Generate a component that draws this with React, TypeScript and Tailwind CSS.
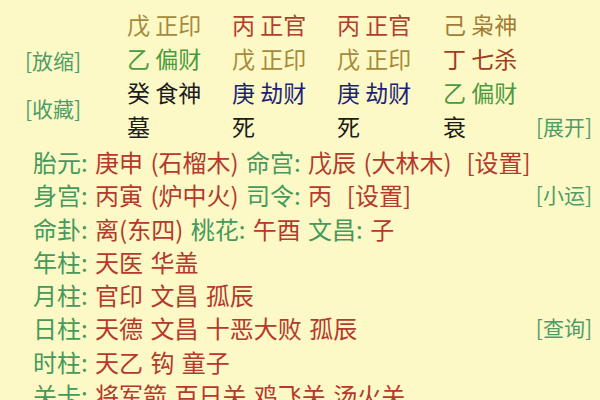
const font = { fontFamily: '"Noto Sans CJK SC", "Noto Sans", sans-serif' };

const OLIVE = "text-[#a68a3c]";
const RED = "text-[#b0402e]";
const GREEN = "text-[#4c9a40]";
const BLACK = "text-[#1c1c1c]";
const BLUE = "text-[#1d1f78]";
const GOLD = "text-[#a27c36]";
const BROWN = "text-[#9e3e20]";

type Cell = { text: string; color: string };

// top row is mostly scrolled out of view
const hiddenRow: Cell[] = [
  { text: "辛 劫财", color: OLIVE },
  { text: "庚 比肩", color: RED },
  { text: "庚 比肩", color: RED },
  { text: "丁 七杀", color: GOLD },
];

const pillars: Cell[][] = [
  [
    { text: "戊 正印", color: OLIVE },
    { text: "丙 正官", color: RED },
    { text: "丙 正官", color: RED },
    { text: "己 枭神", color: GOLD },
  ],
  [
    { text: "乙 偏财", color: GREEN },
    { text: "戊 正印", color: OLIVE },
    { text: "戊 正印", color: OLIVE },
    { text: "丁 七杀", color: BROWN },
  ],
  [
    { text: "癸 食神", color: BLACK },
    { text: "庚 劫财", color: BLUE },
    { text: "庚 劫财", color: BLUE },
    { text: "乙 偏财", color: GREEN },
  ],
  [
    { text: "墓", color: BLACK },
    { text: "死", color: BLACK },
    { text: "死", color: BLACK },
    { text: "衰", color: BLACK },
  ],
];

type Part = { t: string; label?: boolean };

const lines: { parts: Part[]; link?: string }[] = [
  {
    parts: [
      { t: "胎元:", label: true },
      { t: " 庚申 (石榴木) " },
      { t: "命宫:", label: true },
      { t: " 戊辰 (大林木)  [设置]" },
    ],
  },
  {
    parts: [
      { t: "身宫:", label: true },
      { t: " 丙寅 (炉中火) " },
      { t: "司令:", label: true },
      { t: " 丙  [设置]" },
    ],
    link: "[小运]",
  },
  {
    parts: [
      { t: "命卦:", label: true },
      { t: " 离(东四) " },
      { t: "桃花:", label: true },
      { t: " 午酉 " },
      { t: "文昌:", label: true },
      { t: " 子" },
    ],
  },
  { parts: [{ t: "年柱:", label: true }, { t: " 天医 华盖" }] },
  { parts: [{ t: "月柱:", label: true }, { t: " 官印 文昌 孤辰" }] },
  {
    parts: [{ t: "日柱:", label: true }, { t: " 天德 文昌 十恶大败 孤辰" }],
    link: "[查询]",
  },
  { parts: [{ t: "时柱:", label: true }, { t: " 天乙 钩 童子" }] },
  { parts: [{ t: "关卡:", label: true }, { t: " 将军箭 百日关 鸡飞关 汤火关" }] },
];

const cols = "grid grid-cols-[105px_105px_106px_90px] text-[23px] leading-[34px]";

export default function App() {
  return (
    <div
      className="w-[600px] h-[400px] overflow-hidden bg-[#fcf9c6] whitespace-pre"
      style={font}
    >
      <div className="flex -mt-[32px]">
        {/* left action links */}
        <div className="w-[127px] shrink-0 flex flex-col pt-[75px] pl-[25px] text-[21px] text-[#4f9c68]">
          <span className="leading-[34px]">[放缩]</span>
          <span className="leading-[34px] mt-[14px]">[收藏]</span>
        </div>

        <div className="flex flex-col">
          <div className={`${cols} mb-[5px]`}>
            {hiddenRow.map((c, j) => (
              <span key={j} className={c.color}>
                {c.text}
              </span>
            ))}
          </div>
          <div className={cols}>
            {pillars.map((row, i) =>
              row.map((c, j) => (
                <span key={`${i}-${j}`} className={c.color}>
                  {c.text}
                </span>
              ))
            )}
          </div>
        </div>

        <div className="flex-1 flex flex-col justify-end pl-[3px]">
          <span className="text-[21px] leading-[34px] text-[#4f9c68]">[展开]</span>
        </div>
      </div>

      <div className="flex flex-col mt-[2px] pl-[33px] pr-[8px] text-[24px] leading-[33.3px] [word-spacing:2px]">
        {lines.map((l, i) => (
          <div key={i} className="flex justify-between items-center">
            <span className="text-[#b5392c]">
              {l.parts.map((p, k) => (
                <span key={k} className={p.label ? "text-[#45995c]" : undefined}>
                  {p.t}
                </span>
              ))}
            </span>
            {l.link && (
              <span className="text-[21px] text-[#4f9c68] [word-spacing:0px]">{l.link}</span>
            )}
          </div>
        ))}
      </div>
    </div>
  );
}
